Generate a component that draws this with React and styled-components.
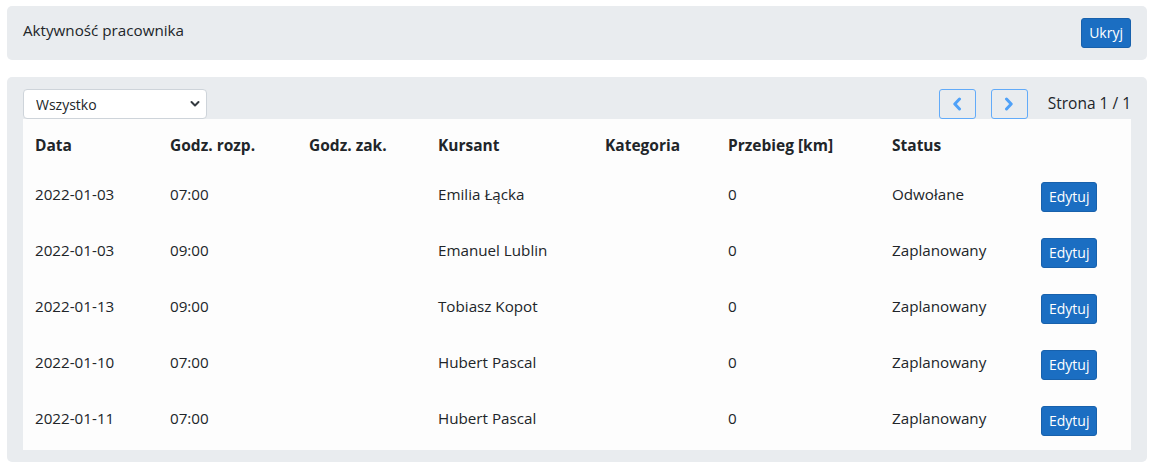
import styled, { createGlobalStyle } from "styled-components";

const GlobalStyle = createGlobalStyle`
  body {
    margin: 0;
    background: #fff;
    font-family: "Segoe UI", "Open Sans", "Noto Sans", sans-serif;
    color: #212529;
  }
`;

const rows = [
  { date: "2022-01-03", start: "07:00", end: "", name: "Emilia Łącka", cat: "", km: "0", status: "Odwołane" },
  { date: "2022-01-03", start: "09:00", end: "", name: "Emanuel Lublin", cat: "", km: "0", status: "Zaplanowany" },
  { date: "2022-01-13", start: "09:00", end: "", name: "Tobiasz Kopot", cat: "", km: "0", status: "Zaplanowany" },
  { date: "2022-01-10", start: "07:00", end: "", name: "Hubert Pascal", cat: "", km: "0", status: "Zaplanowany" },
  { date: "2022-01-11", start: "07:00", end: "", name: "Hubert Pascal", cat: "", km: "0", status: "Zaplanowany" },
];

const headers = ["Data", "Godz. rozp.", "Godz. zak.", "Kursant", "Kategoria", "Przebieg [km]", "Status", ""];

function Chevron({ dir }) {
  return (
    <svg width="10" height="14" viewBox="0 0 10 14">
      <path
        d={dir === "left" ? "M7.5 2 L2.8 7 L7.5 12" : "M2.5 2 L7.2 7 L2.5 12"}
        fill="none"
        stroke="currentColor"
        strokeWidth="3"
        strokeLinecap="round"
        strokeLinejoin="round"
      />
    </svg>
  );
}

export default function App() {
  return (
    <Page>
      <GlobalStyle />
      <TopCard>
        <Title>Aktywność pracownika</Title>
        <PrimaryButton $pad={7}>Ukryj</PrimaryButton>
      </TopCard>
      <MainCard>
        <Toolbar>
          <SelectWrap>
            <Select defaultValue="all">
              <option value="all">Wszystko</option>
            </Select>
            <SelectArrow width="10" height="8" viewBox="0 0 10 8">
              <path d="M1.5 2 L5 5.5 L8.5 2" fill="none" stroke="#343a40" strokeWidth="2" strokeLinecap="round" strokeLinejoin="round" />
            </SelectArrow>
          </SelectWrap>
          <Pager>
            <PageButton disabled>
              <Chevron dir="left" />
            </PageButton>
            <PageButton disabled>
              <Chevron dir="right" />
            </PageButton>
            <PageInfo>Strona 1 / 1</PageInfo>
          </Pager>
        </Toolbar>
        <Table>
          <HeadRow>
            {headers.map((h, i) => (
              <HeadCell key={i}>{h}</HeadCell>
            ))}
          </HeadRow>
          {rows.map((r, i) => (
            <Row key={i}>
              <Cell>{r.date}</Cell>
              <Cell>{r.start}</Cell>
              <Cell>{r.end}</Cell>
              <Cell>{r.name}</Cell>
              <Cell>{r.cat}</Cell>
              <Cell>{r.km}</Cell>
              <Cell>{r.status}</Cell>
              <Cell>
                <PrimaryButton $pad={7}>Edytuj</PrimaryButton>
              </Cell>
            </Row>
          ))}
        </Table>
      </MainCard>
    </Page>
  );
}

const Page = styled.div`
  width: 1140px;
  padding: 6px 0 0 7px;
  display: flex;
  flex-direction: column;
  gap: 17px;
`;

const TopCard = styled.div`
  background: #e9ecef;
  border-radius: 5px;
  padding: 12px 16px;
  display: flex;
  justify-content: space-between;
  align-items: flex-start;
`;

const Title = styled.div`
  font-size: 15.2px;
  line-height: 24px;
`;

const PrimaryButton = styled.button`
  font-family: inherit;
  font-size: 14px;
  line-height: 20px;
  height: 30px;
  padding: 4px ${(p) => p.$pad}px;
  color: #fff;
  background: #1b6ec2;
  border: 1px solid #1861ac;
  border-radius: 3px;
  cursor: pointer;
`;

const MainCard = styled.div`
  background: #e9ecef;
  border-radius: 5px;
  padding: 12px 16px 12px;
`;

const Toolbar = styled.div`
  display: flex;
  justify-content: space-between;
  align-items: center;
  height: 30px;
`;

const SelectWrap = styled.div`
  position: relative;
  width: 184px;
  height: 30px;
`;

const Select = styled.select`
  appearance: none;
  width: 100%;
  height: 30px;
  padding: 0 24px 0 12px;
  font-family: inherit;
  font-size: 14px;
  color: #212529;
  background: #fff;
  border: 1px solid #ced4da;
  border-radius: 4px;
`;

const SelectArrow = styled.svg`
  position: absolute;
  right: 7px;
  top: 11px;
  pointer-events: none;
`;

const Pager = styled.div`
  display: flex;
  align-items: center;
  gap: 15px;
`;

const PageButton = styled.button`
  width: 37px;
  height: 30px;
  padding: 0;
  display: flex;
  align-items: center;
  justify-content: center;
  color: #4fa1f8;
  background: transparent;
  border: 1px solid #62abf9;
  border-radius: 3px;
`;

const PageInfo = styled.div`
  font-size: 15.5px;
  line-height: 24px;
  margin-left: 5px;
  padding-bottom: 2px;
`;

const Table = styled.div`
  background: #fdfdfd;
  display: flex;
  flex-direction: column;
`;

const cols = "135px 139px 129px 167px 123px 164px 149px 102px";

const HeadRow = styled.div`
  display: grid;
  grid-template-columns: ${cols};
  height: 51px;
  padding-top: 14px;
  box-sizing: border-box;
`;

const HeadCell = styled.div`
  padding: 0 12px;
  font-size: 15.5px;
  font-weight: 700;
  line-height: 24px;
`;

const Row = styled.div`
  display: grid;
  grid-template-columns: ${cols};
  height: 56px;
  padding-top: 12px;
  box-sizing: border-box;
  align-items: start;
`;

const Cell = styled.div`
  padding: 0 12px;
  font-size: 15.2px;
  line-height: 24px;
`;
